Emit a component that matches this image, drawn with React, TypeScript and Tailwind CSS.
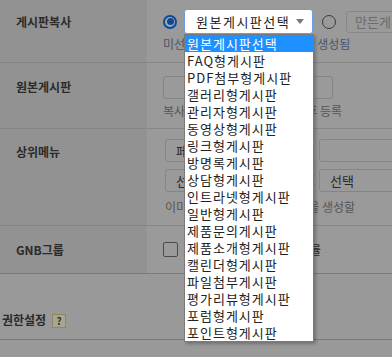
const FONT = { fontFamily: '"Noto Sans CJK KR", "Noto Sans", sans-serif' };

const boards = [
  "원본게시판선택",
  "FAQ형게시판",
  "PDF첨부형게시판",
  "갤러리형게시판",
  "관리자형게시판",
  "동영상형게시판",
  "링크형게시판",
  "방명록게시판",
  "상담형게시판",
  "인트라넷형게시판",
  "일반형게시판",
  "제품문의게시판",
  "제품소개형게시판",
  "캘린더형게시판",
  "파일첨부게시판",
  "평가리뷰형게시판",
  "포럼형게시판",
  "포인트형게시판",
];

const Label = ({ children, pt }: { children: React.ReactNode; pt: string }) => (
  <div className={`w-[147px] shrink-0 bg-[#929292] pl-4 ${pt} text-[12px] leading-[18px] font-bold text-[#2b2b2b]`}>
    {children}
  </div>
);

const Box = ({ className, children }: { className?: string; children?: React.ReactNode }) => (
  <div className={`h-[23px] rounded-[3px] border border-[#858585] bg-[#9a9a9a] flex items-center px-[10px] text-[13px] text-[#2b2b2b] ${className ?? ""}`}>
    {children}
  </div>
);

export default function App() {
  return (
    <div className="relative w-[392px] h-[357px] overflow-hidden bg-[#999999]" style={FONT}>
      {/* 게시판복사 */}
      <div className="flex h-[63px] border-b border-[#868686]">
        <Label pt="pt-[13px]">게시판복사</Label>
        <div className="flex-1 pl-4 pt-[9px] bg-[#9a9a9a]">
          <div className="flex items-center h-[25px]">
            <span className="w-[14px] h-[14px] rounded-full border-2 border-[#0d4a96] flex items-center justify-center bg-[#a9a9a9]">
              <span className="w-[7px] h-[7px] rounded-full bg-[#0d4a96]" />
            </span>
            <div className="relative ml-[7px] w-[129px] h-[25px]">
              <div className="h-full rounded-[3px] border border-[#6f9be0] bg-white flex items-center pl-[11px] pr-[8px] text-[13px] tracking-[1.5px] text-[#222]">
                <span className="flex-1 whitespace-nowrap">원본게시판선택</span>
                <svg width="8" height="5" viewBox="0 0 8 5"><path d="M0 0h8L4 5z" fill="#777" /></svg>
              </div>
            </div>
            <span className="ml-[9px] w-[14px] h-[14px] rounded-full border-[1.5px] border-[#3a3a3a]" />
            <div className="ml-[10px] h-[22px] w-[80px] shrink-0 rounded-[3px] border border-[#888] flex items-center pl-[8px] text-[13px] text-[#6b6b6b] whitespace-nowrap overflow-hidden">
              만든게시판명
            </div>
          </div>
          <div className="mt-[2px] text-[12px] leading-[16px] text-[#4a5568] whitespace-nowrap">
            미선택시 새로운 게시판이 으로 생성됨
          </div>
        </div>
      </div>

      {/* 원본게시판 */}
      <div className="flex h-[66px] border-b border-[#868686]">
        <Label pt="pt-[15px]">원본게시판</Label>
        <div className="flex-1 pl-4 pt-[13px] bg-[#9a9a9a]">
          <Box className="w-[170px]" />
          <div className="mt-[4px] text-[12px] leading-[16px] text-[#555] whitespace-nowrap">
            복사할 원본 게시판을 선택한 후 등록
          </div>
        </div>
      </div>

      {/* 상위메뉴 */}
      <div className="flex h-[97px] border-b border-[#868686]">
        <Label pt="pt-[14px]">상위메뉴</Label>
        <div className="flex-1 pl-[18px] pt-[10px] bg-[#9a9a9a]">
          <div className="flex gap-[5px]">
            <Box className="w-[149px]">페이지</Box>
            <Box className="w-[90px]" />
          </div>
          <div className="flex gap-[5px] mt-[7px]">
            <Box className="w-[149px]">선택</Box>
            <Box className="w-[90px]">선택</Box>
          </div>
          <div className="mt-[7px] text-[12px] leading-[16px] text-[#555] whitespace-nowrap">
            이미 있는 메뉴 아래에 게시판을 생성할
          </div>
        </div>
      </div>

      {/* GNB그룹 */}
      <div className="flex h-[48px] border-b border-[#7a7a7a]">
        <div className="w-[147px] shrink-0 bg-[#929292] pl-4 flex items-center text-[12px] font-bold text-[#2b2b2b]">
          GNB그룹
        </div>
        <div className="flex-1 pl-4 flex items-center bg-[#9a9a9a]">
          <span className="w-[15px] h-[15px] rounded-[2px] border border-[#4a4a4a]" />
          <span className="ml-[8px] text-[12px] text-[#2b2b2b] whitespace-nowrap">GNB 메뉴 그룹 노출 적용률</span>
        </div>
      </div>

      {/* 권한설정 */}
      <div className="flex items-end h-[66px] border-b border-[#7a7a7a] pl-[2px] pb-[10px]">
        <span className="text-[12px] leading-[18px] font-bold text-[#2b2b2b]">권한설정</span>
        <span className="ml-[6px] mb-[1px] w-[14px] h-[14px] border border-[#8c8760] bg-[#a8a690] flex items-center justify-center text-[10px] font-bold text-[#333] leading-none">
          ?
        </span>
      </div>

      {/* opened select list */}
      <ul className="absolute left-[184px] top-[34px] w-[130px] border border-[#7a7a7a] bg-white shadow-[2px_2px_3px_rgba(0,0,0,0.25)]">
        {boards.map((b, i) => (
          <li
            key={b}
            className={`h-[17px] pl-[2px] text-[13px] leading-[17px] tracking-[1px] whitespace-nowrap overflow-hidden ${
              i === 0 ? "bg-[#1e90ff] text-white" : "text-[#222]"
            }`}
          >
            {b}
          </li>
        ))}
      </ul>
    </div>
  );
}
